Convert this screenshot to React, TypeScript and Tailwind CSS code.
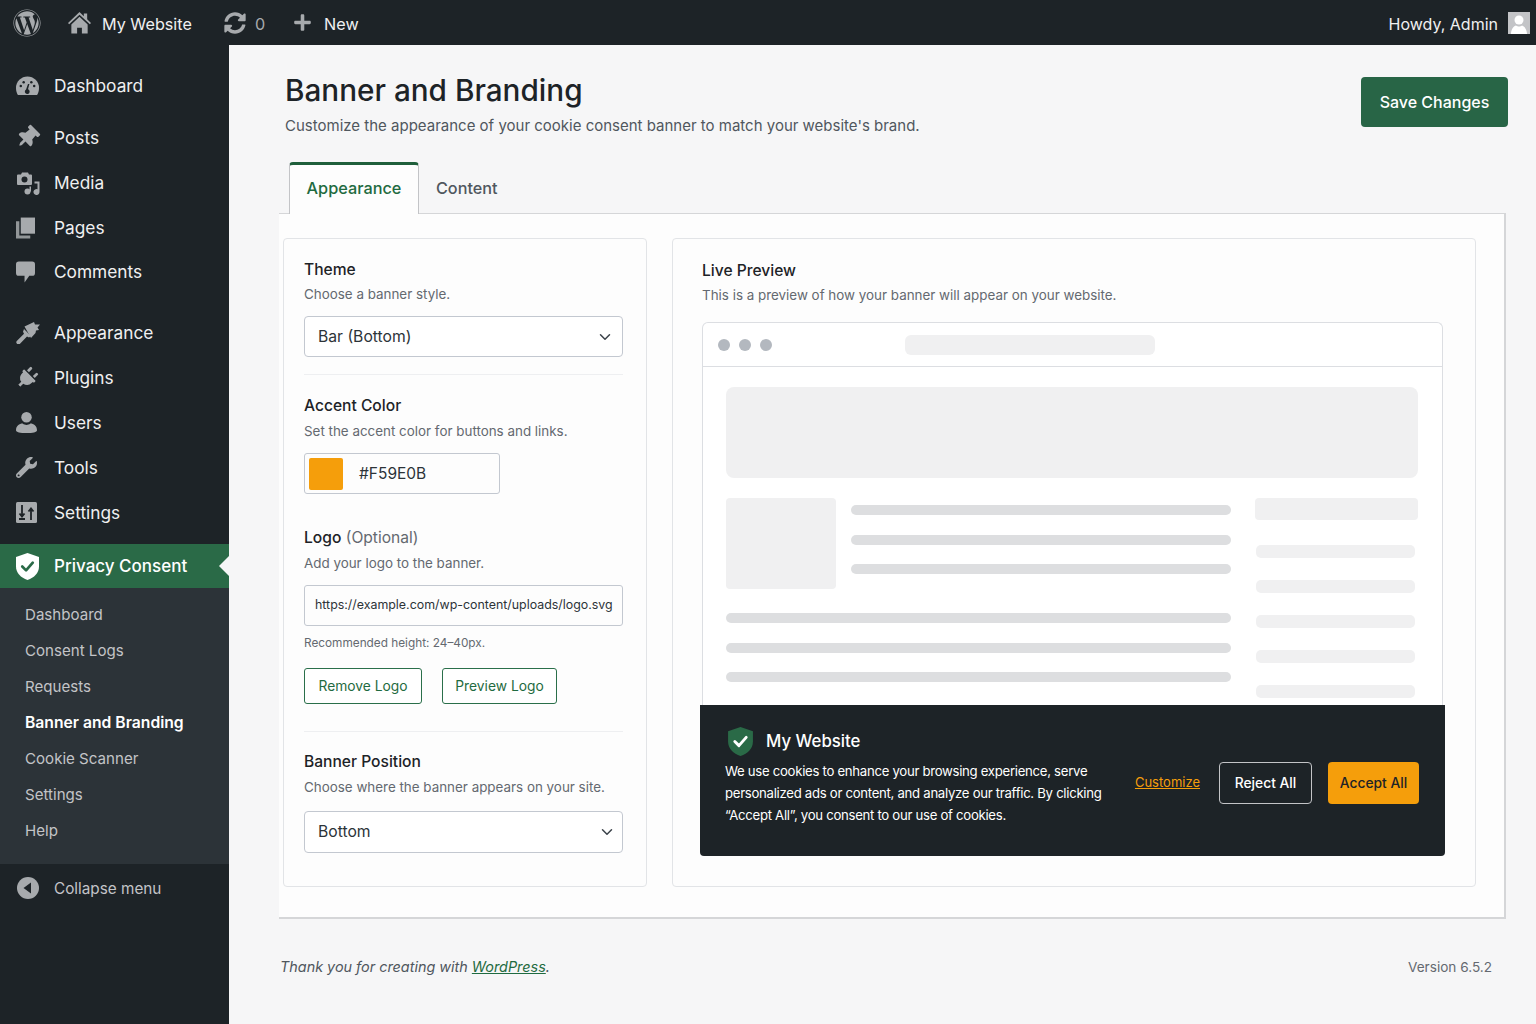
import React from "react";
import { FaWordpress, FaSyncAlt, FaPlus, FaThumbtack, FaPlug, FaWrench } from "react-icons/fa";
import { ChevronDown } from "lucide-react";

const Gauge = () => (
  <svg viewBox="0 0 24 20" className="w-[23px] h-[20px]" fill="#a7aaad">
    <path d="M12 0a12 12 0 0 0-12 12c0 2.600.7 5.400 2 7.500h20c1.300-2.100 2-4.900 2-7.500A12 12 0 0 0 12 0z" />
    <path d="M14 8l-1.500 5.500a2.500 2.500 0 1 1-2 .2L12.500 8z" fill="#1d2327" />
    <circle cx="5" cy="10" r="1.300" fill="#1d2327" />
    <circle cx="8" cy="6" r="1.300" fill="#1d2327" />
    <circle cx="16" cy="6" r="1.300" fill="#1d2327" />
    <circle cx="19" cy="10" r="1.300" fill="#1d2327" />
  </svg>
);
const HomeIcon = () => (
  <svg viewBox="0 0 24 24" className="w-[23px] h-[23px]" fill="#a7aaad">
    <path d="M12 1L0 12.500l1.200 1.300L12 3.800l10.800 10 1.200-1.300-4-3.800V2.500h-3.500v2.900z" />
    <path d="M12 6L3.500 14v9.500h6v-6h5v6h6V14z" />
  </svg>
);
const SyncIcon = () => <FaSyncAlt className="w-[22px] h-[22px] text-[#a7aaad]" />;
const MediaIcon = () => (
  <svg viewBox="0 0 24 24" className="w-[24px] h-[24px]" fill="#a7aaad">
    <path d="M2 3.500h3l1-2h6l1 2h2a1 1 0 0 1 1 1V13a1 1 0 0 1-1 1H2a1 1 0 0 1-1-1V4.500a1 1 0 0 1 1-1z" />
    <circle cx="8.500" cy="8.500" r="3" fill="#1d2327" />
    <path d="M23.500 10.500V21a3 3 0 1 1-2-2.800V12.500h-3v-2z" />
    <circle cx="11.500" cy="20.500" r="3" />
    <path d="M13.500 15.500h1.500v5h-1.500z" />
  </svg>
);
const PagesIcon = () => (
  <svg viewBox="0 0 20 22" className="w-[19px] h-[22px]" fill="#a7aaad">
    <path d="M5 0h15v17H5z" />
    <path d="M0 4h3.500v15H15v3H0z" opacity=".85" />
  </svg>
);
const CommentIcon = () => (
  <svg viewBox="0 0 20 22" className="w-[19px] h-[22px]" fill="#a7aaad">
    <path d="M3 0h14a3 3 0 0 1 3 3v9a3 3 0 0 1-3 3h-3l-5 7v-7H3a3 3 0 0 1-3-3V3a3 3 0 0 1 3-3z" />
  </svg>
);
const BrushIcon = () => (
  <svg viewBox="0 0 24 22" className="w-[24px] h-[22px]" fill="#a7aaad">
    <path d="M8.500 4.500L18 0l1 2.500L24 2.500l-2.500 3 1.500 2.500-3 .5-.5 2.500-4.500 5z" />
    <path d="M8 7l7 7-2 1.500-2-1-7 7.200a2 2 0 0 1-3-3l7-7-1-2z" />
  </svg>
);
const UserIcon = () => (
  <svg viewBox="0 0 22 22" className="w-[21px] h-[21px]" fill="#a7aaad">
    <circle cx="11" cy="5.500" r="5.500" />
    <path d="M0 19c0-4.500 3.500-7 7-7 1.200 1 2.500 1.500 4 1.500s2.800-.5 4-1.500c3.500 0 7 2.500 7 7 0 2-4.500 3-11 3S0 21 0 19z" />
  </svg>
);
const SettingsIcon = () => (
  <svg viewBox="0 0 21 21" className="w-[21px] h-[21px]">
    <rect width="21" height="21" rx="1.500" fill="#a7aaad" />
    <path d="M6 3v11M3.500 11.500L6 14.500l2.500-3M15 18V7M12.500 9.500L15 6.500l2.500 3M3 17h6" stroke="#1d2327" strokeWidth="1.800" fill="none" />
  </svg>
);
const Shield = ({ fill, check, className }: { fill: string; check: string; className: string }) => (
  <svg viewBox="0 0 24 28" className={className}>
    <path d="M12 0l12 4v10c0 7-5 11.500-12 14C5 25.500 0 21 0 14V4z" fill={fill} />
    <path d="M6.500 14l4 4 7-8" stroke={check} strokeWidth="2.800" fill="none" strokeLinecap="round" strokeLinejoin="round" />
  </svg>
);
const CollapseIcon = () => (
  <svg viewBox="0 0 22 22" className="w-[22px] h-[22px]">
    <circle cx="11" cy="11" r="11" fill="#a7aaad" />
    <path d="M14 5.500v11L6.500 11z" fill="#1d2327" />
  </svg>
);
const AvatarIcon = () => (
  <svg viewBox="0 0 22 22" className="w-[22px] h-[22px]" fill="#ffffff">
    <circle cx="11" cy="8" r="4.500" />
    <path d="M3 22c0-5 3-8 5-8.500 1 .8 2 1 3 1s2-.2 3-1c2 .5 5 3.500 5 8.500z" />
  </svg>
);

const Item = ({ icon, label, className = "" }: { icon: React.ReactNode; label: string; className?: string }) => (
  <div className={`flex items-center h-[45px] ${className}`}>
    <span className="w-[54px] pl-[16px] flex items-center">{icon}</span>
    <span className="text-[17.300px] text-[#f0f0f1]">{label}</span>
  </div>
);

const Sub = ({ label, active }: { label: string; active?: boolean }) => (
  <div className={`h-[36px] flex items-center pl-[25px] ${active ? "text-[15.700px] font-semibold text-white" : "text-[15.100px] text-[#c3c4c7]"}`}>{label}</div>
);

const Title = ({ children, className = "" }: { children: React.ReactNode; className?: string }) => (
  <div className={`h-[20px] text-[15.600px] leading-[22px] font-medium text-[#1d2327] ${className}`}>{children}</div>
);
const Desc = ({ children, className = "" }: { children: React.ReactNode; className?: string }) => (
  <div className={`text-[13.400px] leading-[20px] text-[#646970] ${className}`}>{children}</div>
);
const Select = ({ label, className = "" }: { label: string; className?: string }) => (
  <div className={`flex items-center justify-between border border-[#c3c8d0] rounded-[4px] bg-white text-[15.700px] text-[#2c3338] ${className}`}>
    <span>{label}</span>
    <ChevronDown className="w-[18px] h-[18px] text-[#3c434a]" strokeWidth={2} />
  </div>
);
const Btn = ({ children, className = "" }: { children: React.ReactNode; className?: string }) => (
  <div className={`h-[36px] flex items-center justify-center border border-[#2a6f4a] rounded-[3px] text-[13.800px] text-[#1f6b41] bg-white ${className}`}>{children}</div>
);
const Bar = () => <div className="h-[10px] rounded-full bg-[#dddee0]" />;
const Pill = () => <div className="h-[13px] mx-[1px] mr-[3px] rounded-[5px] bg-[#f0f0f1]" />;

export default function App() {
  return (
    <div className="w-[1536px] h-[1024px] overflow-hidden flex flex-col bg-[#f6f6f7]" style={{ fontFamily: "Inter, 'Liberation Sans', sans-serif" }}>
      <header className="h-[45px] shrink-0 bg-[#1d2327] flex items-center text-[#f0f0f1] text-[16.200px]">
        <FaWordpress className="ml-[13px] w-[28px] h-[28px] text-[#a7aaad]" />
        <span className="ml-[27px] flex"><HomeIcon /></span>
        <span className="ml-[11px] pt-[3px]">My Website</span>
        <span className="ml-[32px] flex"><SyncIcon /></span>
        <span className="ml-[9px] pt-[3px] text-[#a7aaad]">0</span>
        <FaPlus className="ml-[28px] w-[19px] h-[19px] text-[#a7aaad]" />
        <span className="ml-[12px] pt-[3px]">New</span>
        <span className="ml-auto pt-[2px] text-[16px]">Howdy, Admin</span>
        <div className="ml-[10px] mr-[6px] w-[22px] h-[22px] bg-[#c3c4c7] overflow-hidden">
          <AvatarIcon />
        </div>
      </header>
      <div className="flex flex-1 min-h-0">
        <aside className="w-[229px] shrink-0 bg-[#1d2327] pt-[18px]">
          <Item icon={<Gauge />} label="Dashboard" />
          <Item icon={<FaThumbtack className="w-[23px] h-[23px] text-[#a7aaad] rotate-45" />} label="Posts" className="mt-[7px]" />
          <Item icon={<MediaIcon />} label="Media" />
          <Item icon={<PagesIcon />} label="Pages" />
          <Item icon={<CommentIcon />} label="Comments" className="!h-[44px]" />
          <Item icon={<BrushIcon />} label="Appearance" className="mt-[16px]" />
          <Item icon={<FaPlug className="w-[22px] h-[22px] text-[#a7aaad] rotate-45" />} label="Plugins" />
          <Item icon={<UserIcon />} label="Users" />
          <Item icon={<FaWrench className="w-[21px] h-[21px] text-[#a7aaad]" />} label="Tools" />
          <Item icon={<SettingsIcon />} label="Settings" />
          <div className="relative mt-[9px] h-[44px] bg-[#2a6a47] flex items-center">
            <span className="w-[54px] pl-[16px] flex items-center">
              <Shield fill="#ffffff" check="#2a6a47" className="w-[23px] h-[27px]" />
            </span>
            <span className="pt-[2px] text-[17px] font-medium text-white">Privacy Consent</span>
            <div className="absolute right-0 top-[12px] w-0 h-0 border-y-[10px] border-y-transparent border-r-[10px] border-r-[#f6f6f7]" />
          </div>
          <div className="bg-[#2c3338] pt-[9px] h-[276px]">
            <Sub label="Dashboard" />
            <Sub label="Consent Logs" />
            <Sub label="Requests" />
            <Sub label="Banner and Branding" active />
            <Sub label="Cookie Scanner" />
            <Sub label="Settings" />
            <Sub label="Help" />
          </div>
          <div className="flex items-center h-[48px]">
            <span className="w-[54px] pl-[17px] flex items-center"><CollapseIcon /></span>
            <span className="pt-[2px] text-[15.300px] text-[#c3c4c7]">Collapse menu</span>
          </div>
        </aside>
        <main className="flex-1 min-w-0">
          <div className="flex justify-between pl-[56px] pr-[28px] pt-[25px]">
            <div>
              <h1 className="text-[29.700px] leading-[40px] font-medium text-[#1d2327]">Banner and Branding</h1>
              <p className="mt-[4px] text-[15px] leading-[24px] text-[#50575e]">Customize the appearance of your cookie consent banner to match your website's brand.</p>
            </div>
            <div className="mt-[7px] w-[147px] h-[50px] rounded-[4px] bg-[#286546] text-white text-[16px] font-medium flex items-center justify-center">Save Changes</div>
          </div>
          <div className="mt-[24px] ml-[60px] flex items-end relative z-10">
            <div className="w-[130px] h-[52px] -mb-[1px] pb-[3px] bg-[#fdfdfd] border border-[#c3c4c7] border-b-0 border-t-[3px] border-t-[#1f5f3b] rounded-t-[4px] flex items-center justify-center text-[16.300px] font-medium text-[#1f6b41]">Appearance</div>
            <div className="ml-[17px] h-[51px] flex items-center text-[16.200px] font-medium text-[#50575e]"><span className="pt-[2px]">Content</span></div>
          </div>
          <section className="ml-[50px] mr-[30px] h-[706px] bg-[#fdfdfd] border-t border-r-2 border-b-2 border-[#d5d6d8] pl-[4px] pr-[28px] pt-[24px] flex gap-[25px]">
            <div className="w-[364px] h-[649px] shrink-0 border border-[#e2e4e7] rounded-[4px] pt-[20px] pl-[20px] pr-[23px]">
              <Title>Theme</Title>
              <Desc className="mt-[5px]">Choose a banner style.</Desc>
              <Select label="Bar (Bottom)" className="mt-[12px] h-[41px] pl-[13px] pr-[8px]" />
              <div className="mt-[17px] h-px bg-[#eeeff1]" />
              <Title className="mt-[20px]">Accent Color</Title>
              <Desc className="mt-[6px]">Set the accent color for buttons and links.</Desc>
              <div className="mt-[12px] w-[196px] h-[41px] border border-[#c3c8d0] rounded-[3px] flex items-center pl-[4px]">
                <div className="w-[34px] h-[32px] bg-[#f59e0b] rounded-[2px]" />
                <span className="ml-[16px] text-[15.500px] text-[#2c3338]">#F59E0B</span>
              </div>
              <div className="mt-[33px] h-[20px] text-[15.600px] leading-[22px] text-[#646970]"><span className="font-medium text-[#1d2327]">Logo</span> (Optional)</div>
              <Desc className="mt-[6px]">Add your logo to the banner.</Desc>
              <div className="mt-[12px] h-[41px] border border-[#c3c8d0] rounded-[3px] flex items-center pl-[10px] text-[12.400px] text-[#2c3338] whitespace-nowrap">https://example.com/wp-content/uploads/logo.svg</div>
              <div className="mt-[9px] text-[11.800px] leading-[16px] text-[#646970]">Recommended height: 24–40px.</div>
              <div className="mt-[17px] flex gap-[20px]">
                <Btn className="w-[118px]">Remove Logo</Btn>
                <Btn className="w-[115px]">Preview Logo</Btn>
              </div>
              <div className="mt-[27px] h-px bg-[#eeeff1]" />
              <Title className="mt-[19px]">Banner Position</Title>
              <Desc className="mt-[6px]">Choose where the banner appears on your site.</Desc>
              <Select label="Bottom" className="mt-[14px] h-[42px] pl-[13px] pr-[6px]" />
            </div>
            <div className="flex-1 min-w-0 h-[649px] border border-[#e2e4e7] rounded-[4px] pt-[21px] pl-[29px] pr-[32px]">
              <Title>Live Preview</Title>
              <Desc className="mt-[5px]">This is a preview of how your banner will appear on your website.</Desc>
              <div className="mt-[17px] h-[383px] bg-white border border-[#dcdee2] border-b-0 rounded-t-[6px] overflow-hidden">
                <div className="h-[44px] border-b border-[#dcdee2] flex items-center pl-[15px]">
                  <div className="flex gap-[9px]">
                    <div className="w-[12px] h-[12px] rounded-full bg-[#b3b8bf]" />
                    <div className="w-[12px] h-[12px] rounded-full bg-[#b3b8bf]" />
                    <div className="w-[12px] h-[12px] rounded-full bg-[#b3b8bf]" />
                  </div>
                  <div className="ml-[133px] w-[250px] h-[20px] rounded-[6px] bg-[#f0f0f1]" />
                </div>
                <div className="pt-[20px] pl-[23px] pr-[24px]">
                  <div className="h-[91px] rounded-[8px] bg-[#f0f0f1]" />
                  <div className="mt-[20px] flex gap-[24px]">
                    <div className="w-[505px] shrink-0">
                      <div className="flex gap-[15px]">
                        <div className="w-[110px] h-[91px] rounded-[4px] bg-[#f0f0f1]" />
                        <div className="flex-1 pt-[7px] flex flex-col gap-[19.500px]">
                          <Bar /><Bar /><Bar />
                        </div>
                      </div>
                      <div className="mt-[24px] flex flex-col gap-[19.500px]">
                        <Bar /><Bar /><Bar />
                      </div>
                    </div>
                    <div className="flex-1">
                      <div className="h-[22px] rounded-[4px] bg-[#f0f0f1]" />
                      <div className="mt-[25px] flex flex-col gap-[22px]">
                        <Pill /><Pill /><Pill /><Pill /><Pill />
                      </div>
                    </div>
                  </div>
                </div>
              </div>
              <div className="-mx-[2px] h-[151px] rounded-b-[4px] bg-[#1d2327] flex pl-[25px] pr-[26px] text-white">
                <div className="w-[392px] shrink-0 pt-[22px]">
                  <div className="flex items-center gap-[13px] pl-[3px]">
                    <Shield fill="#2a6a47" check="#ffffff" className="w-[25px] h-[29px]" />
                    <span className="text-[16.800px] font-medium">My Website</span>
                  </div>
                  <p className="mt-[4px] text-[13.200px] leading-[22px] w-[392px] tracking-[-0.3px]">We use cookies to enhance your browsing experience, serve personalized ads or content, and analyze our traffic. By clicking “Accept All”, you consent to our use of cookies.</p>
                </div>
                <div className="ml-auto pt-[57px] flex items-start">
                  <span className="mt-[11px] text-[13px] text-[#f59e0b] underline">Customize</span>
                  <div className="ml-[19px] w-[93px] h-[42px] border border-[#c3c4c7] rounded-[4px] flex items-center justify-center text-[13.800px] font-medium">Reject All</div>
                  <div className="ml-[16px] w-[91px] h-[42px] rounded-[4px] bg-[#f59e0b] text-[#1d2327] flex items-center justify-center text-[13.800px] font-medium">Accept All</div>
                </div>
              </div>
            </div>
          </section>
          <footer className="mt-[36px] ml-[51px] mr-[44px] flex justify-between items-center leading-[24px]">
            <span className="italic text-[14.400px] text-[#50575e]">Thank you for creating with <span className="text-[#1f6b41] underline">WordPress</span>.</span>
            <span className="text-[13.600px] text-[#646970]">Version 6.5.2</span>
          </footer>
        </main>
      </div>
    </div>
  );
}
